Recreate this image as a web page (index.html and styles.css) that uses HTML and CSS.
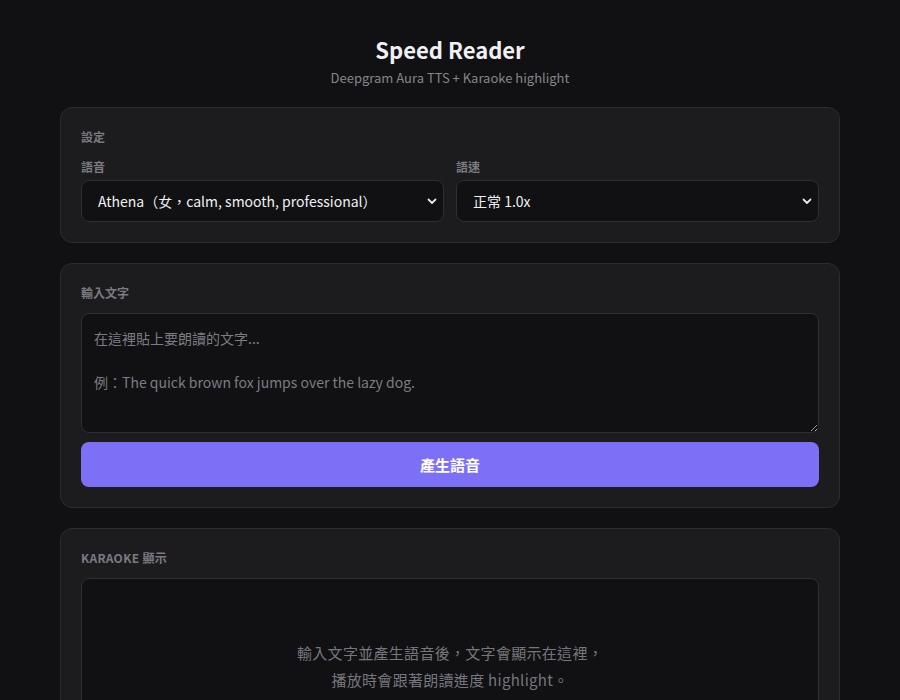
FILE: index.html
```html
<!DOCTYPE html>
<html lang="zh-Hant">
<head>
<meta charset="utf-8">
<title>Speed Reader</title>
<link rel="stylesheet" href="styles.css">
</head>
<body>
<main class="app">
  <header class="head">
    <h1 class="title">Speed Reader</h1>
    <p class="subtitle">Deepgram Aura TTS + Karaoke highlight</p>
  </header>

  <section class="card">
    <div class="section-label">設定</div>
    <div class="settings">
      <div class="field">
        <label class="field-label">語音</label>
        <div class="select-wrap">
          <select class="select">
            <option>Athena（女，calm, smooth, professional）</option>
          </select>
          <svg class="chev" width="12" height="12" viewBox="0 0 12 12"><path d="M2.5 4.5 L6 8 L9.5 4.5" fill="none" stroke="#e6e6ea" stroke-width="1.8" stroke-linecap="round" stroke-linejoin="round"/></svg>
        </div>
      </div>
      <div class="field">
        <label class="field-label">語速</label>
        <div class="select-wrap">
          <select class="select">
            <option>正常 1.0x</option>
          </select>
          <svg class="chev" width="12" height="12" viewBox="0 0 12 12"><path d="M2.5 4.5 L6 8 L9.5 4.5" fill="none" stroke="#e6e6ea" stroke-width="1.8" stroke-linecap="round" stroke-linejoin="round"/></svg>
        </div>
      </div>
    </div>
  </section>

  <section class="card">
    <div class="section-label">輸入文字</div>
    <textarea class="input" placeholder="在這裡貼上要朗讀的文字...

例：The quick brown fox jumps over the lazy dog."></textarea>
    <button class="btn">產生語音</button>
  </section>

  <section class="card">
    <div class="section-label upper">Karaoke 顯示</div>
    <div class="karaoke">
      <p class="empty">輸入文字並產生語音後，文字會顯示在這裡，<br>播放時會跟著朗讀進度 highlight。</p>
    </div>
  </section>
</main>
</body>
</html>
```

FILE: styles.css
```css
* { box-sizing: border-box; }
html, body {
  margin: 0;
  background: #111113;
  color: #e8e8ec;
  font-family: "Noto Sans CJK TC", "Noto Sans", sans-serif;
}
.app {
  width: 780px;
  margin: 0 auto;
  padding-top: 31px;
}
.head { text-align: center; margin-bottom: 19px; }
.title {
  margin: 0;
  font-size: 22px;
  line-height: 36px;
  font-weight: 700;
  color: #f0f0f3;
}
.subtitle {
  margin: 1px 0 0;
  font-size: 13px;
  line-height: 20px;
  color: #85858c;
}
.card {
  background: #1c1c1f;
  border: 1px solid #2b2b30;
  border-radius: 12px;
  padding: 19px 20px 20px;
  margin-bottom: 20px;
}
.section-label {
  font-size: 12px;
  line-height: 20px;
  font-weight: 700;
  color: #7a7a81;
  margin-bottom: 10px;
}
.upper { text-transform: uppercase; letter-spacing: 0.3px; }
.settings {
  display: grid;
  grid-template-columns: 1fr 1fr;
  gap: 12px;
}
.field-label {
  display: block;
  font-size: 12px;
  line-height: 20px;
  font-weight: 700;
  color: #7a7a81;
  margin-bottom: 3px;
}
.select-wrap { position: relative; }
.select {
  appearance: none;
  -webkit-appearance: none;
  width: 100%;
  height: 42px;
  background: #111113;
  color: #f0f0f3;
  border: 1px solid #2e2e33;
  border-radius: 8px;
  padding: 0 30px 0 16px;
  font-family: inherit;
  font-size: 14px;
  font-weight: 400;
  outline: none;
}
.chev {
  position: absolute;
  right: 6px;
  top: 15px;
  pointer-events: none;
}
.input {
  display: block;
  width: 100%;
  height: 120px;
  background: #111113;
  color: #e8e8ec;
  border: 1px solid #2e2e33;
  border-radius: 8px;
  padding: 13px 12px;
  font-family: inherit;
  font-size: 14px;
  line-height: 22px;
  resize: vertical;
  outline: none;
  margin: 0 0 9px;
}
.input::placeholder { color: #7c7c83; }
.btn {
  display: block;
  width: 100%;
  height: 45px;
  border: none;
  border-radius: 8px;
  background: #7c71f6;
  color: #ffffff;
  font-family: inherit;
  font-size: 15px;
  font-weight: 700;
}
.karaoke {
  background: #111113;
  border: 1px solid #2e2e33;
  border-radius: 8px;
  min-height: 176px;
  display: flex;
  align-items: center;
  justify-content: center;
  padding: 20px;
}
.empty {
  margin: 0;
  text-align: center;
  font-size: 15px;
  line-height: 27px;
  color: #76767d;
  letter-spacing: 0.3px;
}
```
